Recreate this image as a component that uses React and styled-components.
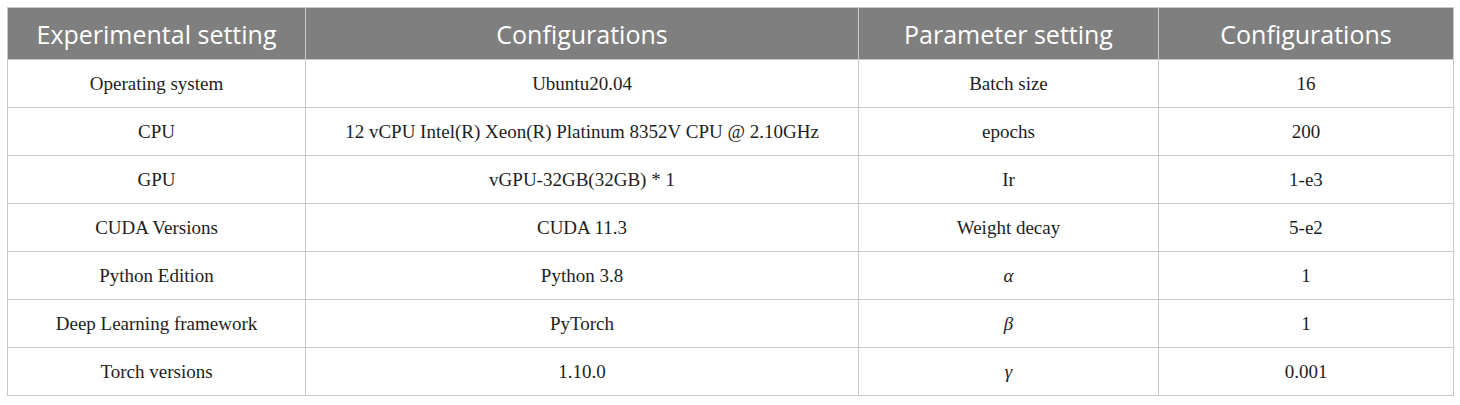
import styled, { createGlobalStyle } from "styled-components"

const Global = createGlobalStyle`
    body {
        margin: 0;
        background: #fff;
    }
`

const Wrap = styled.div`
    padding: 7px 0 0 7px;
`

const Table = styled.table`
    border-collapse: collapse;
    table-layout: fixed;
    width: 1446px;
    border: 1px solid #c9c9c9;
`

const Head = styled.th`
    height: 52px;
    padding: 0;
    background: #7f7f7f;
    color: #fff;
    font: 400 25px 'Open Sans', sans-serif;
    text-align: center;
    border-left: 1px solid #c9c9c9;
    box-sizing: border-box;
`

const Cell = styled.td`
    height: 48px;
    padding: 0;
    text-align: center;
    color: #1e1e1e;
    font: ${p => p.$math ? 'italic' : 'normal'} 400 19px 'Liberation Serif', serif;
    border: 1px solid #c9c9c9;
    box-sizing: border-box;
`

const cols = [298, 553, 300, 295]

const rows = [
    ['Operating system', 'Ubuntu20.04', 'Batch size', '16'],
    ['CPU', '12 vCPU Intel(R) Xeon(R) Platinum 8352V CPU @ 2.10GHz', 'epochs', '200'],
    ['GPU', 'vGPU-32GB(32GB) * 1', 'Ir', '1-e3'],
    ['CUDA Versions', 'CUDA 11.3', 'Weight decay', '5-e2'],
    ['Python Edition', 'Python 3.8', 'α', '1', true],
    ['Deep Learning framework', 'PyTorch', 'β', '1', true],
    ['Torch versions', '1.10.0', 'γ', '0.001', true],
]

export default function App() {
    return (
        <Wrap>
            <Global />
            <Table>
                <colgroup>
                    {cols.map((w, i) => <col key={i} style={{ width: w }} />)}
                </colgroup>
                <thead>
                    <tr>
                        <Head>Experimental setting</Head>
                        <Head>Configurations</Head>
                        <Head>Parameter setting</Head>
                        <Head>Configurations</Head>
                    </tr>
                </thead>
                <tbody>
                    {rows.map((r, i) => (
                        <tr key={i}>
                            <Cell>{r[0]}</Cell>
                            <Cell>{r[1]}</Cell>
                            <Cell $math={r[4]}>{r[2]}</Cell>
                            <Cell>{r[3]}</Cell>
                        </tr>
                    ))}
                </tbody>
            </Table>
        </Wrap>
    )
}
